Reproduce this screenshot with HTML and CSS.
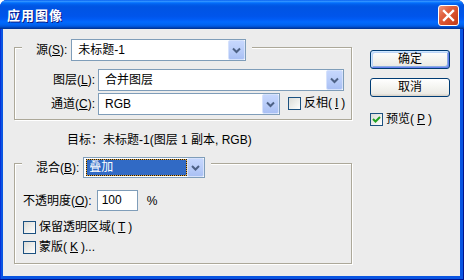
FILE: index.html
```html
<!DOCTYPE html>
<html lang="zh-CN">
<head>
<meta charset="utf-8">
<title>应用图像</title>
<link rel="stylesheet" href="styles.css">
</head>
<body>
<div class="window">
  <div class="titlebar">
    <span class="title">应用图像</span>
    <span class="close"><svg width="19" height="19" viewBox="0 0 19 19"><path d="M5 5 L14 14 M14 5 L5 14" stroke="#fff" stroke-width="2.4" stroke-linecap="square"/></svg></span>
  </div>
  <div class="client">
    <div class="main">
      <div class="group g1">
        <div class="ghead">
          <span class="lab">源(<u>S</u>):</span>
          <div class="combo w-src"><span class="val">未标题-1</span><span class="drop"><svg width="17" height="20" viewBox="0 0 17 20"><path d="M5 8.5 L8.5 12 L12 8.5" fill="none" stroke="#4D6185" stroke-width="2"/></svg></span></div>
        </div>
        <div class="rows">
          <div class="row">
            <span class="lbl">图层(<u>L</u>):</span>
            <div class="combo w-layer"><span class="val">合并图层</span><span class="drop"><svg width="17" height="20" viewBox="0 0 17 20"><path d="M5 8.5 L8.5 12 L12 8.5" fill="none" stroke="#4D6185" stroke-width="2"/></svg></span></div>
          </div>
          <div class="row">
            <span class="lbl">通道(<u>C</u>):</span>
            <div class="combo w-chan"><span class="val">RGB</span><span class="drop"><svg width="17" height="20" viewBox="0 0 17 20"><path d="M5 8.5 L8.5 12 L12 8.5" fill="none" stroke="#4D6185" stroke-width="2"/></svg></span></div>
            <span class="check inv"><span class="box"></span>反相(<u>I</u>)</span>
          </div>
        </div>
      </div>
      <div class="target">目标：未标题-1(图层 1 副本, RGB)</div>
      <div class="group g2">
        <div class="ghead">
          <span class="lab">混合(<u>B</u>):</span>
          <div class="combo w-blend"><span class="focus"><span class="sel">叠加</span></span><span class="drop"><svg width="17" height="19" viewBox="0 0 17 19"><path d="M5 8 L8.5 11.5 L12 8" fill="none" stroke="#4D6185" stroke-width="2"/></svg></span></div>
        </div>
        <div class="oprow">
          <span class="oplab">不透明度(<u>O</u>):</span>
          <span class="input">100</span>
          <span class="pct">%</span>
        </div>
        <div class="check crow"><span class="box"></span>保留透明区域(<u>T</u>)</div>
        <div class="check crow"><span class="box"></span>蒙版(<u>K</u>)...</div>
      </div>
    </div>
    <div class="side">
      <div class="btn default">确定</div>
      <div class="btn">取消</div>
      <div class="check preview"><span class="box"><svg width="11" height="11" viewBox="0 0 11 11"><path d="M2 5 L4.5 7.5 L9 3" fill="none" stroke="#21A121" stroke-width="2"/></svg></span>预览(<u>P</u>)</div>
    </div>
  </div>
</div>
</body>
</html>
```
FILE: styles.css
```css
html, body {
  margin: 0;
  padding: 0;
  background: #ffffff;
}
body {
  font-family: "Liberation Sans", "Noto Sans CJK SC", sans-serif;
  font-size: 12px;
  color: #000;
}
u { text-decoration: underline; text-underline-offset: 1px; }

.window {
  width: 464px;
  height: 280px;
  display: flex;
  flex-direction: column;
  background: #0A55E2;
  border-radius: 7px 7px 0 0;
  overflow: hidden;
  box-shadow: inset -1px -1px 0 #00138C, inset 1px 0 0 #0831D9;
}

.titlebar {
  height: 29px;
  flex: none;
  display: flex;
  align-items: center;
  justify-content: space-between;
  padding: 0 5px 0 7px;
  background: linear-gradient(to bottom, #0058EE 0%, #3593FF 4%, #288EFF 6%, #127DFF 8%, #036FFC 10%, #0262EE 14%, #0057E5 20%, #0054E3 24%, #0055EB 56%, #005BF5 66%, #026AFE 76%, #0062EF 86%, #0052D6 92%, #0040AB 96%, #003092 100%);
}
.title {
  color: #fff;
  font-family: "Noto Sans CJK SC", sans-serif;
  font-weight: bold;
  font-size: 13px;
  letter-spacing: 1px;
  line-height: 16px;
  text-shadow: 1px 1px 0 #0A1883;
  margin-top: 1px;
}
.close {
  width: 19px;
  height: 19px;
  border: 1px solid #fff;
  border-radius: 3px;
  background: linear-gradient(135deg, #F0957A 0%, #E0603E 35%, #D24A26 70%, #C03A16 100%);
  display: flex;
  margin-top: 2px;
}

.client {
  flex: 1;
  margin: 0 4px 4px 3px;
  background: #ECECEC;
  display: flex;
  align-items: flex-start;
}

.main {
  width: 338px;
  margin: 18px 0 0 11px;
}

.group {
  border: 1px solid #ACA899;
  box-shadow: 1px 1px 0 #fff, inset 1px 1px 0 #fff;
  box-sizing: border-box;
  width: 338px;
}
.g1 { height: 73px; }
.g2 { height: 101px; }

.ghead {
  display: flex;
  align-items: center;
  gap: 4px;
  width: fit-content;
  background: #ECECEC;
  padding: 0 6px 0 14px;
  margin-left: 7px;
}
.g1 .ghead { margin-top: -9px; }
.g2 .ghead { margin-top: -7px; }

.lab, .lbl, .oplab { white-space: nowrap; line-height: 14px; }

.combo {
  box-sizing: border-box;
  height: 22px;
  border: 1px solid #7F9DB9;
  background: #fff;
  display: flex;
  align-items: center;
  justify-content: space-between;
}
.combo .val { padding-left: 6px; line-height: 14px; }
.drop {
  width: 17px;
  height: 20px;
  align-self: stretch;
  box-sizing: border-box;
  border: 1px solid #D6E2FC;
  border-radius: 2px;
  background: linear-gradient(to bottom, #C6D7FD 0%, #B7CBF8 60%, #A9C0F4 100%);
  display: flex;
}
.drop svg { display: block; margin: -1px; }
.w-src { width: 175px; }
.w-layer { width: 246px; }
.w-chan { width: 182px; }
.w-blend { width: 122px; height: 21px; padding-left: 2px; }
.w-blend .drop { height: 19px; }

.focus {
  background: #E8A83A;
  display: flex;
  width: 101px;
  height: 17px;
}
.sel {
  flex: 1;
  border: 1px dotted #1a1a1a;
  background: #316AC5;
  background-clip: padding-box;
  color: #fff;
  line-height: 15px;
  padding-left: 2px;
}

.rows {
  margin-top: 8px;
  display: flex;
  flex-direction: column;
  gap: 2px;
}
.row {
  display: flex;
  align-items: center;
  gap: 3px;
}
.lbl {
  width: 80px;
  text-align: right;
}

.check {
  display: flex;
  align-items: center;
  gap: 3px;
  white-space: nowrap;
  line-height: 14px;
}
.box {
  width: 13px;
  height: 13px;
  box-sizing: border-box;
  border: 1px solid #1C5180;
  background: linear-gradient(135deg, #DCDCD7 0%, #F4F4F2 70%, #FFFFFF 100%);
  display: flex;
  align-items: center;
  justify-content: center;
  flex: none;
}
.inv { margin-left: 5px; margin-top: -2px; }

.target {
  line-height: 14px;
  margin: 13px 0 16px 53px;
  white-space: nowrap;
}

.oprow {
  display: flex;
  align-items: center;
  margin: 12px 0 0 8px;
}
.oplab { margin-right: 5px; }
.input {
  box-sizing: border-box;
  width: 41px;
  height: 21px;
  border: 1px solid #7F9DB9;
  background: #fff;
  padding-left: 4px;
  line-height: 19px;
}
.pct { margin-left: 9px; }

.crow {
  height: 20px;
  margin-left: 8px;
}
.oprow + .crow { margin-top: 6px; }

.side {
  margin: 21px 0 0 18px;
  display: flex;
  flex-direction: column;
  align-items: flex-start;
}
.btn {
  box-sizing: border-box;
  width: 80px;
  height: 19px;
  border: 1px solid #003C74;
  border-radius: 3px;
  background: linear-gradient(to bottom, #FFFFFF 0%, #F4F4F0 50%, #ECEBE6 85%, #D6D0C5 100%);
  text-align: center;
  line-height: 17px;
  font-size: 12px;
}
.btn + .btn { margin-top: 9px; }
.btn.default {
  box-shadow: inset 1px 1px 0 #CEE7FF, inset -1px -1px 0 #6982EE, inset 2px 2px 0 #BCD4F6, inset -2px -2px 0 #89ADE4;
}
.preview { margin-top: 15px; }
```
